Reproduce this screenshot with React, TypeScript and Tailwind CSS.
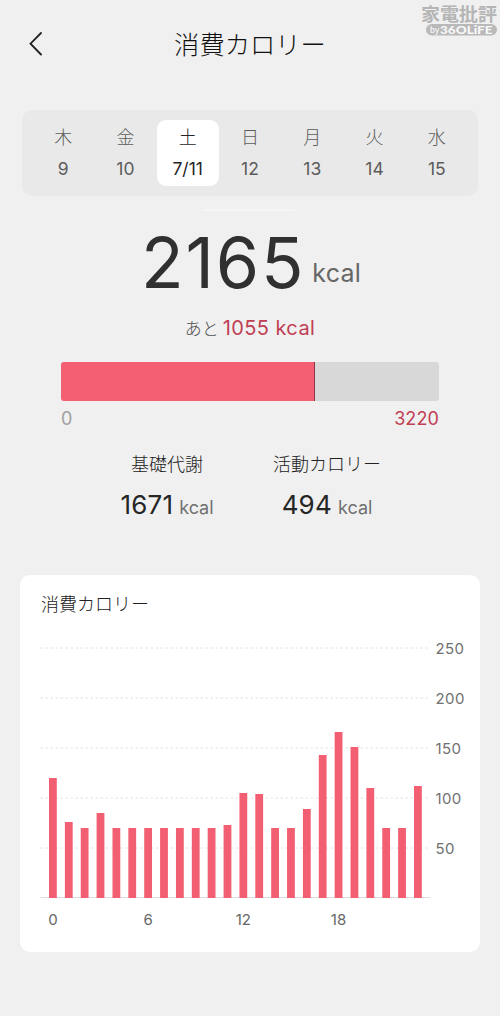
import { clsx } from 'clsx';

interface Day {
  label: string;
  date: string;
  active?: boolean;
}

interface StatProps {
  title: string;
  value: number;
  className?: string;
}

const days: Day[] = [
  { label: '木', date: '9' },
  { label: '金', date: '10' },
  { label: '土', date: '7/11', active: true },
  { label: '日', date: '12' },
  { label: '月', date: '13' },
  { label: '火', date: '14' },
  { label: '水', date: '15' },
];

const hourly = [
  120, 76, 70, 85, 70, 70, 70, 70, 70, 70, 70, 73,
  105, 104, 70, 70, 89, 143, 166, 151, 110, 70, 70, 112,
];

const total = 2165;
const goal = 3220;

function Watermark() {
  return (
    <div className="absolute right-[3px] top-[3px] flex w-[76px] flex-col">
      <svg className="block overflow-visible" width="76" height="21" viewBox="0 0 76 21">
        <text x="0" y="17.5" fontSize="18" fontWeight="700" fill="#b5b5b5" textLength="76" lengthAdjust="spacingAndGlyphs" fontFamily="'Noto Sans CJK JP', sans-serif">
          家電批評
        </text>
      </svg>
      <svg className="ml-[5px] block" width="71" height="12" viewBox="0 0 71 12">
        <rect width="71" height="11.5" rx="5.75" fill="#b9b9b9" />
        <text x="4" y="9" fontSize="8.5" fontWeight="600" fill="#f0f0f0" textLength="9.5" lengthAdjust="spacingAndGlyphs" fontFamily="Inter, sans-serif">
          by
        </text>
        <text x="14" y="9.9" fontSize="11" fontWeight="900" fill="#f8f8f8" textLength="52.5" lengthAdjust="spacingAndGlyphs" fontFamily="Lato, sans-serif">
          36OLiFE
        </text>
      </svg>
    </div>
  );
}

function Stat({ title, value, className }: StatProps) {
  return (
    <div className={clsx('flex flex-col items-center', className)}>
      <p className="h-7 text-[18px] font-light leading-7 text-[#222]">{title}</p>
      <p className="mt-2 flex h-9 items-baseline leading-9">
        <span className="text-[26px] tracking-[0.2px] text-[#262626]">{value}</span>
        <span className="ml-1.5 text-[18px] text-[#707070]">kcal</span>
      </p>
    </div>
  );
}

function HourlyChart() {
  // one pixel per kcal, baseline at y = 269.5
  const base = 269.5;
  return (
    <svg className="block" width="460" height="317" viewBox="0 0 460 317">
      {[250, 200, 150, 100, 50].map((tick) => (
        <g key={tick}>
          <line x1="20.5" x2="410.5" y1={base - tick + 0.5} y2={base - tick + 0.5} stroke="#e2e2e2" strokeDasharray="2.5 2.5" />
          <text x="415.5" y={base - tick + 6} fontSize="15" letterSpacing="0.4" fill="#707070">
            {tick}
          </text>
        </g>
      ))}
      <line x1="20.5" x2="410.5" y1={base} y2={base} stroke="#dedede" />
      {hourly.map((kcal, hour) => (
        <rect key={hour} x={29 + hour * 15.87} y={base - kcal + 0.5} width="7.8" height={kcal} fill="#f25f72" />
      ))}
      {[0, 6, 12, 18].map((hour) => (
        <text key={hour} x={32.9 + hour * 15.87} y="296.5" fontSize="15" textAnchor="middle" fill="#666">
          {hour}
        </text>
      ))}
    </svg>
  );
}

export default function App() {
  return (
    <main className="relative h-[1016px] w-[500px] overflow-hidden bg-[#f0f0f0] font-normal font-['Inter','Noto_Sans_CJK_JP',sans-serif]">
      <Watermark />

      <header className="grid h-[88px] grid-cols-[72px_1fr_72px] items-center">
        <button aria-label="戻る" className="flex h-full items-center pl-[29px]">
          <svg width="14" height="24" viewBox="0 0 14 24" fill="none" stroke="#222" strokeWidth="1.8" strokeLinecap="round">
            <path d="M12 1 1.5 11.7 12 22.5" />
          </svg>
        </button>
        <h1 className="pt-px text-center text-[25.3px] font-light text-[#111]">消費カロリー</h1>
      </header>

      <nav className="mx-[22px] mt-[22px] grid h-[86px] grid-cols-7 rounded-[10px] bg-[#e9e9e9] p-2.5">
        {days.map((day) => (
          <button
            key={day.label}
            className={clsx(
              'flex flex-col items-center rounded-[9px] pt-[5px] text-[18px]',
              day.active ? 'bg-white text-[#262626]' : 'text-[#5c5c5c]'
            )}
          >
            <span className="h-[30px] font-light leading-[26px]">{day.label}</span>
            <span className="text-[17.5px] leading-7">{day.date}</span>
          </button>
        ))}
      </nav>

      <div className="ml-[203px] mt-[13px] h-[2px] w-[92px] bg-[#f5f5f5]" />

      <section>
        <div className="mt-[7px] flex h-[90px] items-baseline pl-[141px] leading-[90px]">
          <span className="text-[70px] tracking-[1.8px] text-[#303030]">{total}</span>
          <span className="relative -top-1.5 ml-[7px] text-[25px] tracking-[0.2px] text-[#666]">kcal</span>
        </div>
        <p className="mt-[6px] flex h-7 items-baseline justify-center leading-7">
          <span className="text-[17px] font-light text-[#505050]">あと</span>
          <span className="ml-1 text-[20px] tracking-[0.4px] text-[#c03f54]">{goal - total} kcal</span>
        </p>
        <div className="mx-[61px] mt-[20px] flex h-[39px] overflow-hidden rounded-[3px] bg-[#d8d8d8]">
          <div className="border-r border-[#8f3a48] bg-[#f55f73]" style={{ width: `${(total / goal) * 100}%` }} />
        </div>
        <div className="mx-[61px] mt-1 flex h-7 justify-between text-[18px] leading-7 tracking-[0.1px]">
          <span className="text-[#a0a0a0]">0</span>
          <span className="text-[#c03f54]">{goal}</span>
        </div>
      </section>

      <section className="mt-[18px] flex h-[72px]">
        <Stat title="基礎代謝" value={1671} className="ml-[107px] w-[120px]" />
        <Stat title="活動カロリー" value={494} className="ml-[40px] w-[120px]" />
      </section>

      <section className="mx-5 mt-[52px] h-[377px] rounded-[10px] bg-white">
        <h2 className="h-[53px] pl-[21px] pt-4 text-[18px] font-light leading-7 text-[#222]">消費カロリー</h2>
        <HourlyChart />
      </section>
    </main>
  );
}
